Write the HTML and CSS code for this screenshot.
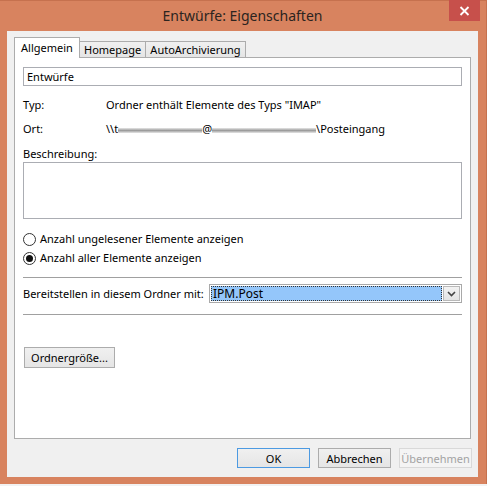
FILE: index.html
```html
<!DOCTYPE html>
<html lang="de">
<head>
<meta charset="utf-8">
<title>Entwürfe: Eigenschaften</title>
<link rel="stylesheet" href="styles.css">
</head>
<body>
<div class="window">
  <div class="titlebar">
    <span class="title">Entwürfe: Eigenschaften</span>
    <div class="close">
      <svg width="11" height="10" viewBox="0 0 11 10"><path d="M1.5 1 L9.5 9 M9.5 1 L1.5 9" stroke="#fff" stroke-width="1.8" fill="none"/></svg>
    </div>
  </div>
  <div class="client">
    <div class="tabs">
      <div class="tab active">Allgemein</div>
      <div class="tab">Homepage</div>
      <div class="tab">AutoArchivierung</div>
    </div>
    <div class="panel">
      <div class="textbox">Entwürfe</div>
      <div class="info">
        <span class="lbl">Typ:</span><span>Ordner enthält Elemente des Typs "IMAP"</span>
        <span class="lbl">Ort:</span><span class="ort">\\t<span class="blur b1"></span>@<span class="blur b2"></span>\Posteingang</span>
      </div>
      <div class="desc-label">Beschreibung:</div>
      <div class="textarea"></div>
      <div class="radios">
        <label class="radio"><span class="circle"></span>Anzahl ungelesener Elemente anzeigen</label>
        <label class="radio"><span class="circle checked"></span>Anzahl aller Elemente anzeigen</label>
      </div>
      <div class="sep"></div>
      <div class="combo-row">
        <span>Bereitstellen in diesem Ordner mit:</span>
        <div class="combo">
          <div class="combo-value"><span>IPM.Post</span></div>
          <div class="combo-btn">
            <svg width="9" height="6" viewBox="0 0 9 6"><path d="M1 1 L4.5 4.5 L8 1" stroke="#444" stroke-width="1.6" fill="none"/></svg>
          </div>
        </div>
      </div>
      <div class="sep sep2"></div>
      <div class="btn size-btn">Ordnergröße...</div>
    </div>
    <div class="buttons">
      <div class="btn default">OK</div>
      <div class="btn">Abbrechen</div>
      <div class="btn disabled">Übernehmen</div>
    </div>
  </div>
</div>
<div class="desktop"></div>
</body>
</html>
```
FILE: styles.css
```css
html, body {
  margin: 0;
  padding: 0;
}
body {
  width: 487px;
  height: 486px;
  overflow: hidden;
  background: #e9e6e2;
  font-family: "Noto Sans", "Open Sans", sans-serif;
  font-size: 11px;
  color: #000;
}
.window {
  width: 487px;
  height: 484px;
  box-sizing: border-box;
  background: #d8835f;
  padding: 0 8px 7px 7px;
  display: flex;
  flex-direction: column;
  border-right: 1px solid #c6714e;
  border-top: 1px solid #c6714e;
}
.titlebar {
  height: 30px;
  position: relative;
  display: flex;
  align-items: center;
  justify-content: center;
  flex-shrink: 0;
}
.title {
  font-size: 14px;
  color: #2b2420;
  margin-top: -1px;
}
.close {
  position: absolute;
  top: -1px;
  right: -2px;
  width: 31px;
  height: 21px;
  background: #c7504b;
  display: flex;
  align-items: center;
  justify-content: center;
}
.client {
  flex: 1;
  background: #f0f0f0;
  padding: 7px 7px 0 7px;
  display: flex;
  flex-direction: column;
}
.tabs {
  display: flex;
  align-items: flex-end;
  height: 19px;
  position: relative;
  z-index: 1;
}
.tab {
  height: 15px;
  line-height: 15px;
  border: 1px solid #acacac;
  border-bottom: none;
  background: linear-gradient(#f0f0f0, #e5e5e5);
  padding: 0 4px;
  box-sizing: content-box;
  text-align: center;
  color: #000;
}
.tab + .tab {
  margin-left: -1px;
}
.tab:nth-child(2) { width: 57px; margin-left: 0; border-left: none; }
.tab:nth-child(3) { width: 91px; }
.tab.active {
  width: 56px;
  height: 20px;
  line-height: 19px;
  background: #fff;
  margin-bottom: -1px;
}
.panel {
  height: 382px;
  box-sizing: border-box;
  border: 1px solid #acacac;
  background: #fff;
  padding: 9px 8px 0 8px;
  display: flex;
  flex-direction: column;
}
.textbox {
  height: 19px;
  box-sizing: border-box;
  border: 1px solid #abadb3;
  padding-left: 3px;
  line-height: 17px;
}
.info {
  display: grid;
  grid-template-columns: 83px 1fr;
  row-gap: 8px;
  margin-top: 11px;
  line-height: 16px;
}
.ort {
  display: flex;
  align-items: center;
  white-space: nowrap;
}
.blur {
  display: inline-block;
  height: 5px;
  background: linear-gradient(#e6e6e6, #9c9c9c 50%, #e6e6e6);
  filter: blur(0.6px);
}
.b1 { width: 84px; margin-top: 2px; }
.b2 { width: 104px; margin-top: 2px; }
.desc-label {
  margin-top: 9px;
  line-height: 16px;
}
.textarea {
  height: 57px;
  box-sizing: border-box;
  border: 1px solid #abadb3;
}
.radios {
  margin-top: 12px;
  display: flex;
  flex-direction: column;
  gap: 3px;
}
.radio {
  display: flex;
  align-items: center;
  gap: 4px;
  line-height: 16px;
}
.circle {
  width: 11px;
  height: 11px;
  border: 1px solid #333;
  border-radius: 50%;
  background: #fff;
  display: flex;
  align-items: center;
  justify-content: center;
}
.circle.checked::after {
  content: "";
  width: 7px;
  height: 7px;
  border-radius: 50%;
  background: #111;
}
.sep {
  margin-top: 11px;
  border-top: 1px solid #a0a0a0;
}
.combo-row {
  margin-top: 6px;
  display: flex;
  align-items: center;
  justify-content: space-between;
}
.combo {
  width: 253px;
  height: 19px;
  box-sizing: border-box;
  border: 1px solid #a9a9a9;
  display: flex;
  padding: 1px;
  gap: 1px;
}
.combo-value {
  flex: 1;
  background: #94c6fa;
  border: 1px dotted #333;
  box-sizing: border-box;
  display: flex;
  align-items: center;
  padding-left: 1px;
  font-size: 12px;
}
.combo-btn {
  width: 17px;
  box-sizing: border-box;
  border: 1px solid #b9b9b9;
  background: linear-gradient(#f2f2f2, #e4e4e4);
  display: flex;
  align-items: center;
  justify-content: center;
}
.sep2 {
  margin-top: 11px;
}
.btn {
  width: 73px;
  height: 20px;
  box-sizing: border-box;
  border: 1px solid #acacac;
  background: linear-gradient(#f0f0f0, #e5e5e5);
  display: flex;
  align-items: center;
  justify-content: center;
  color: #000;
}
.size-btn {
  margin-top: 32px;
  margin-left: 1px;
  width: 91px;
  height: 21px;
}
.buttons {
  display: flex;
  justify-content: flex-end;
  gap: 8px;
  margin-top: 9px;
  margin-right: -1px;
}
.btn.default {
  border-color: #4c9ae2;
}
.btn.disabled {
  background: #f4f4f4;
  border-color: #d9d9d9;
  color: #a3a3a3;
}
.desktop {
  height: 2px;
  background: #f2f2f2;
}
```
